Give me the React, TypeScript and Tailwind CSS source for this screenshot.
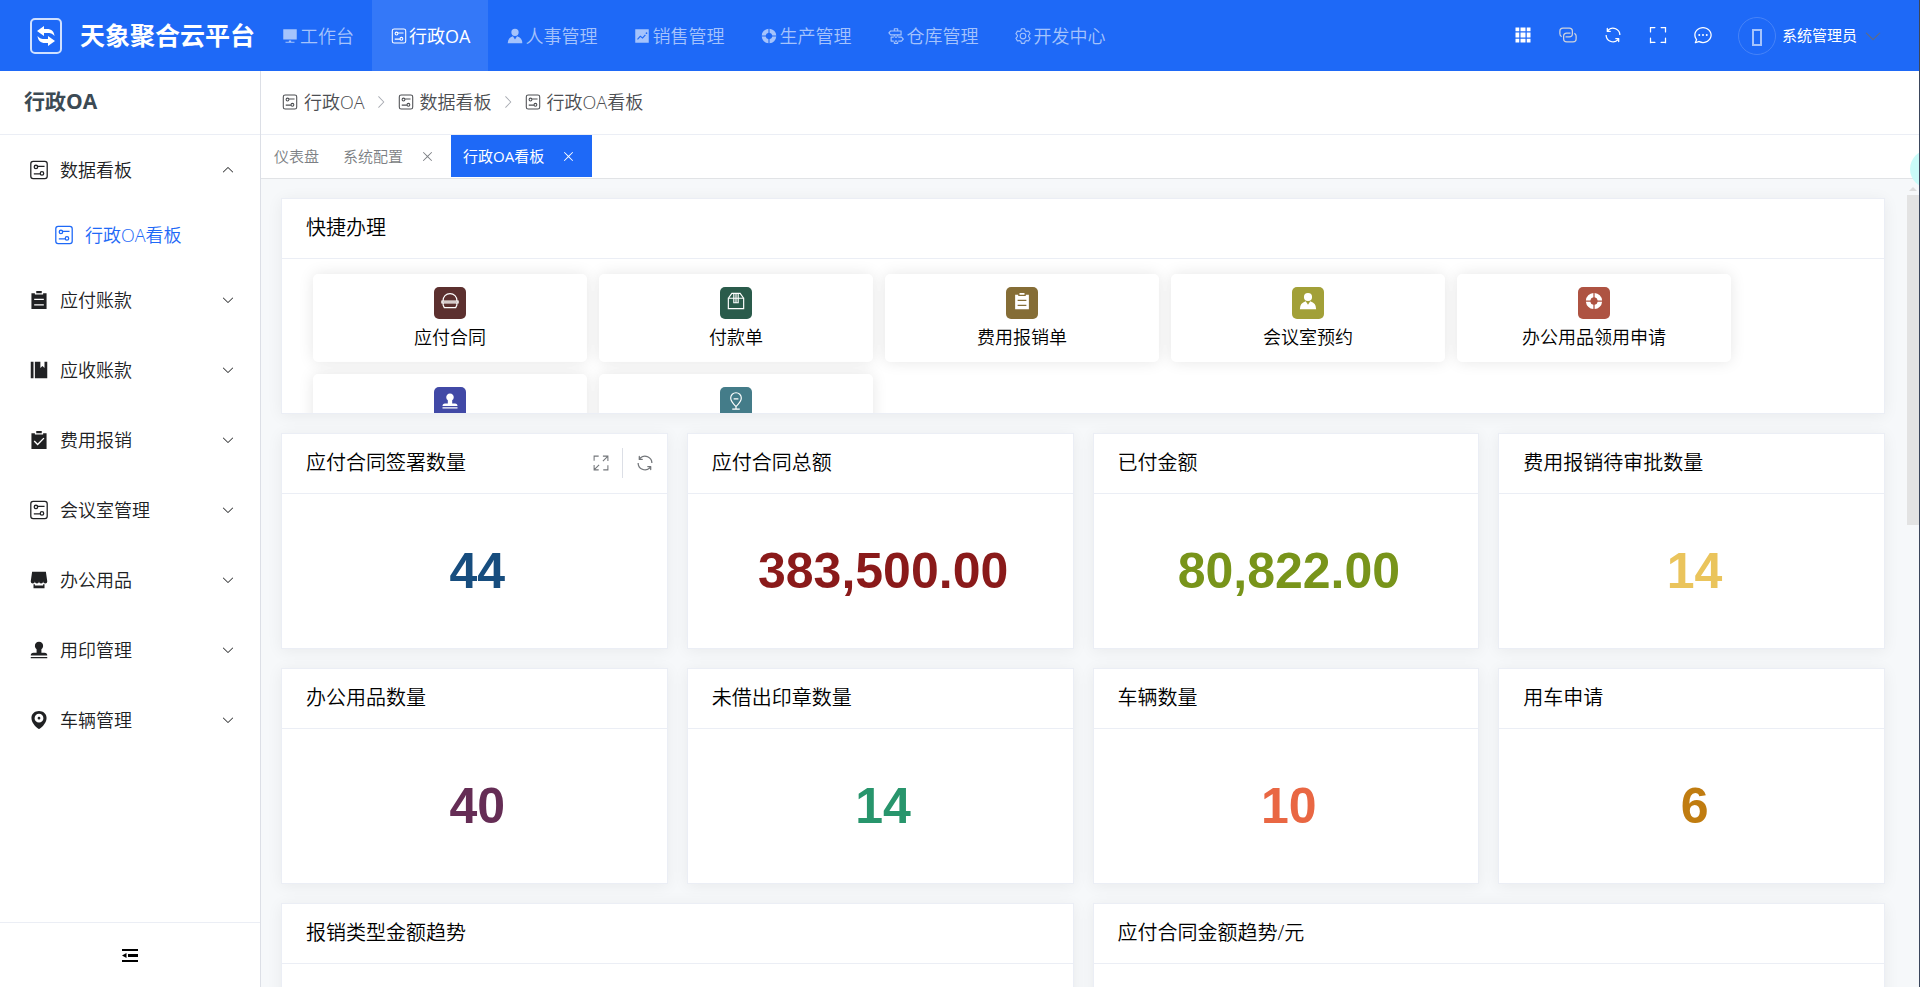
import React, { useState } from 'react';

const ICONS = {
  platform: 'M448 832v-64h128v64h192v64H256v-64h192zM128 704V128h768v576H128z',
  avatar:
    'M628.736 528.896A416 416 0 0 1 928 928H96a415.872 415.872 0 0 1 299.264-399.104L512 704l116.736-175.104zM720 304a208 208 0 1 1-416 0 208 208 0 0 1 416 0z',
  trend:
    'M128 896V128h768v768H128zm291.712-327.296 128 102.4 180.16-201.792-47.744-42.624-139.84 156.608-128-102.4-180.16 201.792 47.744 42.624 139.84-156.608zM816 352a48 48 0 1 0-96 0 48 48 0 0 0 96 0z',
  help: 'M926.784 480H701.312A192.512 192.512 0 0 0 544 322.688V97.216A416.064 416.064 0 0 1 926.784 480zm0 64A416.064 416.064 0 0 1 544 926.784V701.312A192.512 192.512 0 0 0 701.312 544h225.472zM97.28 544h225.472A192.512 192.512 0 0 0 480 701.312v225.472A416.064 416.064 0 0 1 97.216 544zm0-64A416.064 416.064 0 0 1 480 97.216v225.472A192.512 192.512 0 0 0 322.688 480H97.216z',
  guide:
    'M640 608h-64V416h64v192zm0 160v160a32 32 0 0 1-32 32H416a32 32 0 0 1-32-32V768h64v128h128V768h64zM384 608V416h64v192h-64zm256-352h-64V128H448v128h-64V96a32 32 0 0 1 32-32h192a32 32 0 0 1 32 32v160zM220.8 256l-71.232 80 71.168 80H768V256H220.8zm-14.4-64H800a32 32 0 0 1 32 32v224a32 32 0 0 1-32 32H206.4a32 32 0 0 1-23.936-10.752l-99.584-112a32 32 0 0 1 0-42.496l99.584-112A32 32 0 0 1 206.4 192zm678.784 496-71.104 80H266.816V608h547.2l71.168 80zm-56.768-144H234.88a32 32 0 0 0-32 32v224a32 32 0 0 0 32 32h593.6a32 32 0 0 0 23.936-10.752l99.584-112a32 32 0 0 0 0-42.496l-99.584-112A32 32 0 0 0 828.48 544z',
  setting:
    'M600.704 64a32 32 0 0 1 30.464 22.208l35.2 109.376c14.784 7.232 28.928 15.36 42.432 24.512l112.384-24.192a32 32 0 0 1 34.432 15.36L944.32 364.8a32 32 0 0 1-4.032 37.504l-77.12 85.12a357.12 357.12 0 0 1 0 49.024l77.12 85.248a32 32 0 0 1 4.032 37.504l-88.704 153.6a32 32 0 0 1-34.432 15.296L708.8 803.904c-13.44 9.088-27.648 17.28-42.368 24.512l-35.264 109.376A32 32 0 0 1 600.704 960H423.296a32 32 0 0 1-30.464-22.208L357.696 828.48a351.616 351.616 0 0 1-42.56-24.64l-112.32 24.256a32 32 0 0 1-34.432-15.36L79.68 659.2a32 32 0 0 1 4.032-37.504l77.12-85.248a357.12 357.12 0 0 1 0-48.896l-77.12-85.248A32 32 0 0 1 79.68 364.8l88.704-153.6a32 32 0 0 1 34.432-15.296l112.32 24.256c13.568-9.152 27.776-17.408 42.56-24.64l35.2-109.312A32 32 0 0 1 423.232 64H600.64zm-23.424 64H446.72l-36.352 113.088-24.512 11.968a294.113 294.113 0 0 0-34.816 20.096l-22.656 15.36-116.224-25.088-65.28 113.152 79.68 88.192-1.92 27.136a293.12 293.12 0 0 0 0 40.192l1.92 27.136-79.808 88.192 65.344 113.152 116.224-25.024 22.656 15.296a294.113 294.113 0 0 0 34.816 20.096l24.512 11.968L446.72 896h130.688l36.48-113.152 24.448-11.904a288.282 288.282 0 0 0 34.752-20.096l22.592-15.296 116.288 25.024 65.28-113.152-79.744-88.192 1.92-27.136a293.12 293.12 0 0 0 0-40.256l-1.92-27.136 79.808-88.128-65.344-113.152-116.288 24.96-22.592-15.232a287.616 287.616 0 0 0-34.752-20.096l-24.448-11.904L577.344 128zM512 320a192 192 0 1 1 0 384 192 192 0 0 1 0-384zm0 64a128 128 0 1 0 0 256 128 128 0 0 0 0-256z',
  list: 'M704 192h160v736H160V192h160v64h384v-64zM288 512h448v-64H288v64zm0 256h448v-64H288v64zm96-576V96h256v96H384z',
  management: 'M576 128v288l96-96 96 96V128h128v768H320V128h256zm-448 0h128v768H128V128z',
  checked:
    'M704 192h160v736H160V192h160.064v64H704v-64zM311.616 537.28l-45.312 45.248L447.36 763.52l316.8-316.8-45.312-45.184L447.36 673.024 311.616 537.28zM384 192V96h256v96H384z',
  shop: 'M704 704h64v192H256V704h64v64h384v-64zm188.544-152.192C894.528 559.616 896 567.616 896 576a96 96 0 1 1-192 0 96 96 0 1 1-192 0 96 96 0 1 1-192 0 96 96 0 1 1-192 0c0-8.384 1.408-16.384 3.392-24.192L192 128h640l60.544 423.808z',
  stamp:
    'M624 475.968V640h144a128 128 0 0 1 128 128H128a128 128 0 0 1 128-128h144V475.968a192 192 0 1 1 224 0zM128 896v-64h768v64H128z',
  location:
    'M512 928c23.936 0 117.504-68.352 192.064-153.152C803.456 661.888 864 535.808 864 416c0-189.632-155.84-320-352-320S160 226.368 160 416c0 120.32 60.544 246.4 159.936 359.232C394.432 859.84 488 928 512 928zm0-435.2a64 64 0 1 0 0-128 64 64 0 0 0 0 128zm0 140.8a204.8 204.8 0 1 1 0-409.6 204.8 204.8 0 0 1 0 409.6z',
  grid: 'M640 384v256H384V384h256zm64 0h192v256H704V384zm-64 512H384V704h256v192zm64 0V704h192v192H704zm-64-768v192H384V128h256zm64 0h192v192H704V128zM320 384v256H128V384h192zm0 512H128V704h192v192zm0-768v192H128V128h192z',
  connection:
    'M640 384v64H448a128 128 0 0 0-128 128v128a128 128 0 0 0 128 128h320a128 128 0 0 0 128-128V576a128 128 0 0 0-64-110.848V394.88c74.56 26.368 128 97.472 128 181.056v128a192 192 0 0 1-192 192H448a192 192 0 0 1-192-192V576a192 192 0 0 1 192-192h192zM384 640v-64h192a128 128 0 0 0 128-128V320a128 128 0 0 0-128-128H256a128 128 0 0 0-128 128v128a128 128 0 0 0 64 110.848v70.272A192.064 192.064 0 0 1 64 448V320a192 192 0 0 1 192-192h320a192 192 0 0 1 192 192v128a192 192 0 0 1-192 192H384z',
  refresh:
    'M771.776 794.88A384 384 0 0 1 128 512h64a320 320 0 0 0 555.712 216.448H654.72a32 32 0 1 1 0-64h149.056a32 32 0 0 1 32 32v148.928a32 32 0 1 1-64 0v-50.56zM276.288 295.616h92.992a32 32 0 0 1 0 64H220.16a32 32 0 0 1-32-32V178.56a32 32 0 0 1 64 0v50.56A384 384 0 0 1 896.128 512h-64a320 320 0 0 0-555.776-216.384z',
  fullScreen:
    'm160 96.064 192 .192a32 32 0 0 1 0 64l-192-.192V352a32 32 0 0 1-64 0V96h64v.064zm0 831.872V928H96V672a32 32 0 1 1 64 0v191.936l192-.192a32 32 0 1 1 0 64l-192 .192zM864 96.064V96h64v256a32 32 0 1 1-64 0V160.064l-192 .192a32 32 0 1 1 0-64l192-.192zm0 831.872-192-.192a32 32 0 0 1 0-64l192 .192V672a32 32 0 1 1 64 0v256h-64v-.064z',
  chat: 'm174.72 855.68 135.296-45.12 23.68 11.84C388.096 849.536 448.576 864 512 864c211.84 0 384-166.784 384-352S723.84 160 512 160 128 326.784 128 512c0 69.12 24.96 139.264 70.848 199.232l22.08 28.8-46.272 115.584zm-45.248 82.56A32 32 0 0 1 89.6 896l58.368-145.92C94.72 680.32 64 596.864 64 512 64 299.904 256 96 512 96s448 203.904 448 416-192 416-448 416a461.056 461.056 0 0 1-206.912-48.384l-175.616 58.56zM512 563.2a51.2 51.2 0 1 1 0-102.4 51.2 51.2 0 0 1 0 102.4zm192 0a51.2 51.2 0 1 1 0-102.4 51.2 51.2 0 0 1 0 102.4zm-384 0a51.2 51.2 0 1 1 0-102.4 51.2 51.2 0 0 1 0 102.4z',
  arrow:
    'M831.872 340.864 512 652.672 192.128 340.864a30.592 30.592 0 0 0-42.752 0 29.12 29.12 0 0 0 0 41.6L489.664 714.24a32 32 0 0 0 44.672 0l340.288-331.712a29.12 29.12 0 0 0 0-41.728 30.592 30.592 0 0 0-42.752 0z',
  close:
    'M764.288 214.592 512 466.88 259.712 214.592a31.936 31.936 0 0 0-45.12 45.12L466.752 512 214.528 764.224a31.936 31.936 0 1 0 45.12 45.184L512 557.184l252.288 252.288a31.936 31.936 0 0 0 45.12-45.12L557.12 512.064l252.288-252.352a31.936 31.936 0 1 0-45.12-45.184z',
};

// Line icons are stroked, the rest are filled shapes
const LINE_ICONS = {
  board:
    'M240 110H784a110 110 0 0 1 110 110V804a110 110 0 0 1-110 110H240a110 110 0 0 1-110-110V220a110 110 0 0 1 110-110zM290 370a80 80 0 1 0 160 0 80 80 0 1 0-160 0M450 340H770M570 670a80 80 0 1 0 160 0 80 80 0 1 0-160 0M270 690H570',
  burger:
    'M150 520C150 290 310 130 512 130S874 290 874 520M96 520H928V610H96zM160 610V720L220 850H804L864 720V610',
  box: 'M120 370V900H904V370zM120 370 300 120H724L904 370M400 120V600H624V120M512 120V600',
  pin: 'M512 800C360 650 240 520 240 360a272 272 0 0 1 544 0C784 520 664 650 512 800zM390 400H634M320 930H704M512 800V930',
  expand:
    'M120 380V120H380M620 120H904V400M904 640V904H640M380 904H120V620M880 144 620 404M144 880 404 620',
};

type IconName = keyof typeof ICONS | keyof typeof LINE_ICONS;

const Icon: React.FC<{ name: IconName; className?: string }> = ({ name, className = 'w-[18px] h-[18px]' }) => {
  const isLine = name in LINE_ICONS;
  return (
    <svg viewBox="0 0 1024 1024" className={`shrink-0 ${className}`} aria-hidden="true">
      {isLine ? (
        <path d={LINE_ICONS[name as keyof typeof LINE_ICONS]} fill="none" stroke="currentColor" strokeWidth="60" />
      ) : (
        <path d={ICONS[name as keyof typeof ICONS]} fill="currentColor" />
      )}
    </svg>
  );
};

const topMenu: { label: string; icon: IconName }[] = [
  { label: '工作台', icon: 'platform' },
  { label: '行政OA', icon: 'board' },
  { label: '人事管理', icon: 'avatar' },
  { label: '销售管理', icon: 'trend' },
  { label: '生产管理', icon: 'help' },
  { label: '仓库管理', icon: 'guide' },
  { label: '开发中心', icon: 'setting' },
];

const tools: { label: string; icon: IconName; color: string }[] = [
  { label: '应用', icon: 'grid', color: 'text-white' },
  { label: '链接', icon: 'connection', color: 'text-[#cfd3dc]' },
  { label: '刷新', icon: 'refresh', color: 'text-white' },
  { label: '全屏', icon: 'fullScreen', color: 'text-white' },
  { label: '消息', icon: 'chat', color: 'text-white' },
];

const sideMenu: { label: string; icon: IconName; children?: string[] }[] = [
  { label: '数据看板', icon: 'board', children: ['行政OA看板'] },
  { label: '应付账款', icon: 'list' },
  { label: '应收账款', icon: 'management' },
  { label: '费用报销', icon: 'checked' },
  { label: '会议室管理', icon: 'board' },
  { label: '办公用品', icon: 'shop' },
  { label: '用印管理', icon: 'stamp' },
  { label: '车辆管理', icon: 'location' },
];

const shortcuts: { label?: string; icon: IconName; color: string }[] = [
  { label: '应付合同', icon: 'burger', color: 'bg-[#5c302f]' },
  { label: '付款单', icon: 'box', color: 'bg-[#2a5b4b]' },
  { label: '费用报销单', icon: 'list', color: 'bg-[#856d36]' },
  { label: '会议室预约', icon: 'avatar', color: 'bg-[#a2a038]' },
  { label: '办公用品领用申请', icon: 'help', color: 'bg-[#ae5342]' },
  { icon: 'stamp', color: 'bg-[#4149a6]' },
  { icon: 'pin', color: 'bg-[#447c89]' },
];

const stats = [
  { title: '应付合同签署数量', value: '44', color: 'text-[#174d7e]', tools: true },
  { title: '应付合同总额', value: '383,500.00', color: 'text-[#8a1a1a]' },
  { title: '已付金额', value: '80,822.00', color: 'text-[#78941a]' },
  { title: '费用报销待审批数量', value: '14', color: 'text-[#eac45c]' },
  { title: '办公用品数量', value: '40', color: 'text-[#652d55]' },
  { title: '未借出印章数量', value: '14', color: 'text-[#28956c]' },
  { title: '车辆数量', value: '10', color: 'text-[#e96743]' },
  { title: '用车申请', value: '6', color: 'text-[#c07c10]' },
];

const Card: React.FC<{ title: string; className?: string; tools?: boolean; children?: React.ReactNode }> = ({
  title,
  className = '',
  tools: hasTools,
  children,
}) => (
  <section
    className={`flex h-[216px] flex-col overflow-hidden border border-[#ebeef5] bg-white shadow-[0_2px_15px_rgba(0,0,0,0.06)] ${className}`}
  >
    <header className="flex h-[60px] shrink-0 items-center justify-between border-b border-[#ebeef5] pb-px pl-6 pr-3">
      <h2 className="text-xl text-black">{title}</h2>
      {hasTools && (
        <div className="flex items-center pb-px text-[#73767a]">
          <button aria-label="放大" className="px-3">
            <Icon name="expand" />
          </button>
          <span className="h-[30px] w-px bg-[#dcdfe6]" />
          <button aria-label="刷新" className="pl-3">
            <Icon name="refresh" className="w-5 h-5" />
          </button>
        </div>
      )}
    </header>
    {children}
  </section>
);

const TopBar: React.FC = () => {
  const [active, setActive] = useState('行政OA');

  return (
    <header className="flex h-[71px] shrink-0 items-center bg-[#1e69f7] text-white">
      <div className="flex w-[263px] shrink-0 items-center pl-[30px]">
        <svg viewBox="0 0 32 36" className="w-8 h-9 shrink-0" aria-hidden="true">
          <rect x="1" y="1" width="30" height="34" rx="4" fill="none" stroke="#cfe0ff" strokeWidth="2" />
          <path d="M7 13 14 8v3h3c4.500 0 7 2.500 7.500 7-2-2.500-4-3-7.500-3h-3v3z" fill="#fff" />
          <path d="M25 23 18 28v-3h-3c-4.500 0-7-2.500-7.500-7 2 2.500 4 3 7.500 3h3v-3z" fill="#fff" />
        </svg>
        <h1 className="ml-[18px] whitespace-nowrap text-[25px] font-bold">天象聚合云平台</h1>
      </div>
      <nav className="flex h-full">
        {topMenu.map((item) => (
          <button
            key={item.label}
            onClick={() => setActive(item.label)}
            className={`flex items-center gap-px whitespace-nowrap px-[18px] text-lg ${
              active === item.label ? 'bg-[#3478f8] font-normal text-white' : 'text-[#a5c3fc]'
            }`}
          >
            <Icon name={item.icon} />
            {item.label}
          </button>
        ))}
      </nav>
      <div className="ml-auto flex items-center gap-[25px] pr-9">
        {tools.map((tool) => (
          <button key={tool.label} aria-label={tool.label} className={`pb-[2px] ${tool.color}`}>
            <Icon name={tool.icon} className="w-5 h-5" />
          </button>
        ))}
        <button className="flex items-center gap-[6px] text-[15px] font-normal">
          <span className="flex h-[38px] w-[38px] items-center justify-center rounded-full border border-[#4683f8]">
            <span className="mt-1 h-[17px] w-[10px] border-2 border-[#a5c3fc]" />
          </span>
          系统管理员
          <Icon name="arrow" className="w-5 h-5 text-[#606b85]" />
        </button>
      </div>
    </header>
  );
};

const SideBar: React.FC = () => (
  <aside className="flex w-[261px] shrink-0 flex-col border-r border-[#dcdfe6] bg-white">
    <div className="flex h-16 shrink-0 items-center border-b border-[#ebeef5] pb-[2px] pl-6 text-[21px] font-bold text-[#3c4a54]">
      行政OA
    </div>
    <nav className="min-h-0 flex-1 overflow-hidden text-lg text-[#202123]">
      {sideMenu.map((item) => (
        <div key={item.label}>
          <button className="flex h-[70px] w-full items-center pl-[28px] pr-[25px]">
            <Icon name={item.icon} className="w-[22px] h-[22px]" />
            <span className="ml-[10px]">{item.label}</span>
            <Icon name="arrow" className={`ml-auto w-[14px] h-[14px] ${item.children ? 'rotate-180' : ''}`} />
          </button>
          {item.children?.map((child) => (
            <a key={child} href="#" className="flex h-[60px] items-center pl-[53px] text-[#1e69f7]">
              <Icon name="board" className="w-[22px] h-[22px]" />
              <span className="ml-[10px]">{child}</span>
            </a>
          ))}
        </div>
      ))}
    </nav>
    <button
      aria-label="收起菜单"
      className="flex h-[65px] shrink-0 items-center justify-center border-t border-[#ebeef5] text-black"
    >
      <svg viewBox="0 0 16 13" className="w-4 h-[13px]" fill="currentColor" aria-hidden="true">
        <path d="M0 0h16v2H0zM6 5h10v3H6zM0 11h16v2H0zM0 6.500 4.500 4v5z" />
      </svg>
    </button>
  </aside>
);

const Breadcrumb: React.FC = () => (
  <nav className="flex h-16 shrink-0 items-center border-b border-[#ebeef5] bg-white pb-[2px] pl-5 text-lg text-[#4c4e52]">
    {['行政OA', '数据看板', '行政OA看板'].map((label, i) => (
      <React.Fragment key={label}>
        {i > 0 && <Icon name="arrow" className="mx-2 w-4 h-4 -rotate-90 text-[#a8abb2]" />}
        <a href="#" className="flex items-center gap-[5px]">
          <Icon name="board" />
          {label}
        </a>
      </React.Fragment>
    ))}
  </nav>
);

const Tabs: React.FC = () => (
  <div className="flex h-11 shrink-0 border-b border-[#e1e3e6] bg-white pb-px pl-px text-[15px] text-[#7c7f84]">
    <button className="px-3">仪表盘</button>
    <div className="flex items-center px-3">
      <button>系统配置</button>
      <button aria-label="关闭系统配置" className="px-[17px] pr-1">
        <Icon name="close" className="w-[15px] h-[15px]" />
      </button>
    </div>
    <div className="flex items-center bg-[#1e69f7] px-3 font-normal text-white">
      <button>行政OA看板</button>
      <button aria-label="关闭行政OA看板" className="px-[17px] pr-1">
        <Icon name="close" className="w-[15px] h-[15px]" />
      </button>
    </div>
  </div>
);

export default function App() {
  return (
    <div className="relative flex h-screen flex-col overflow-hidden border-r border-[#3b465c] bg-white font-['Open_Sans','Noto_Sans_CJK_SC',sans-serif] font-[350]">
      <TopBar />
      <div className="flex min-h-0 flex-1">
        <SideBar />
        <div className="flex min-w-0 flex-1 flex-col bg-[#f6f8fa]">
          <Breadcrumb />
          <Tabs />
          <div className="flex min-h-0 flex-1">
            <main className="min-w-0 flex-1 overflow-hidden pl-5 pr-[21px] pt-[19px]">
              <div className="grid grid-cols-4 gap-[19px]">
                <Card title="快捷办理" className="col-span-4">
                  <div className="flex flex-wrap gap-3 pl-[31px] pr-7 pt-[15px]">
                    {shortcuts.map((item) => (
                      <button
                        key={item.icon}
                        className="flex h-[88px] w-[274px] flex-col items-center rounded-[5px] bg-white pt-[13px] text-lg text-black shadow-[0_0_15px_rgba(0,0,0,0.1)]"
                      >
                        <span className={`flex h-8 w-8 shrink-0 justify-center rounded-[5px] pt-1 text-white ${item.color}`}>
                          <Icon name={item.icon} className="w-5 h-5" />
                        </span>
                        {item.label && <span className="mt-1">{item.label}</span>}
                      </button>
                    ))}
                  </div>
                </Card>
                {stats.map((stat) => (
                  <Card key={stat.title} title={stat.title} tools={stat.tools}>
                    <p
                      className={`flex flex-1 items-center justify-center pl-[6px] font-['Liberation_Sans',sans-serif] text-[50px] font-bold ${stat.color}`}
                    >
                      {stat.value}
                    </p>
                  </Card>
                ))}
                <Card title="报销类型金额趋势" className="col-span-2" />
                <Card title="应付合同金额趋势/元" className="col-span-2" />
              </div>
            </main>
            {/* scroll track */}
            <div className="flex w-[13px] shrink-0 flex-col items-center pt-2">
              <span className="h-0 w-0 border-x-4 border-b-4 border-x-transparent border-b-[#dcdcdc]" />
              <span className="mt-1 h-[330px] w-3 bg-[#e3e3e3]" />
            </div>
          </div>
        </div>
      </div>
      <button
        aria-label="助手"
        className="absolute -right-[29px] top-[150px] h-[38px] w-[38px] rounded-full bg-[#c9fbf8]"
      />
    </div>
  );
}
